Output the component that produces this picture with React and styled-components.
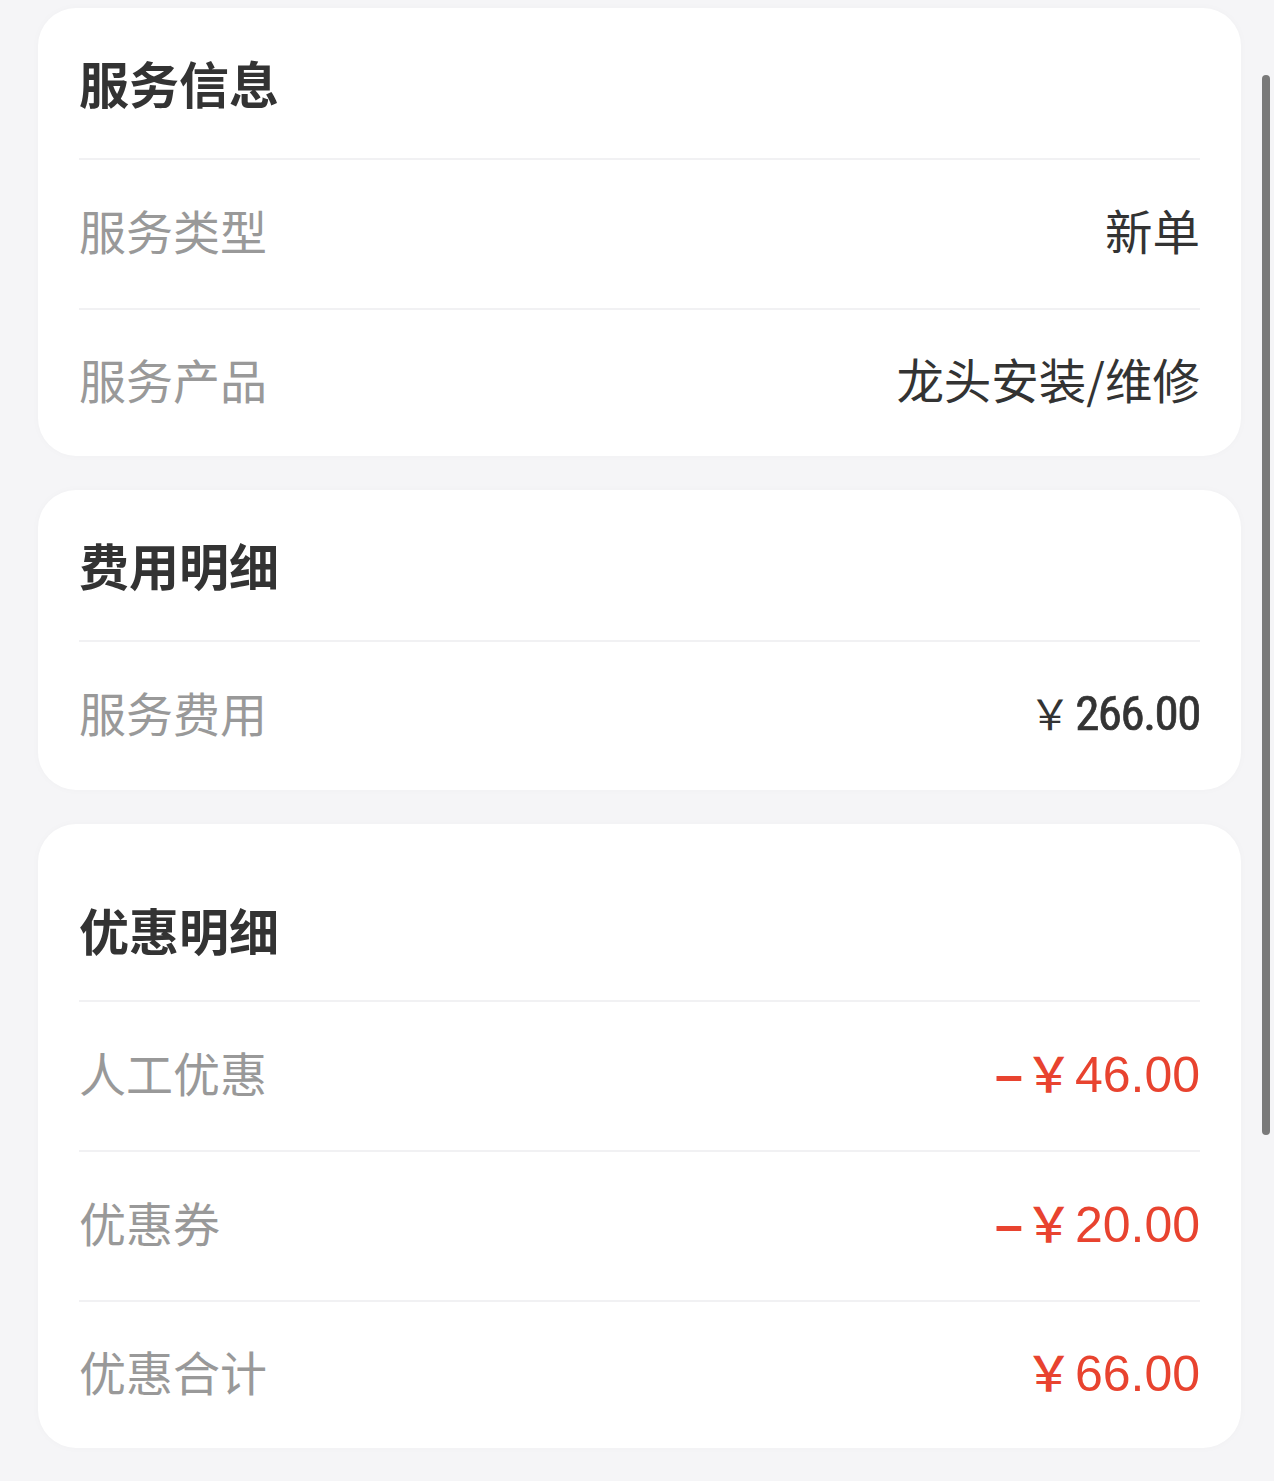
import React from "react";
import styled, { createGlobalStyle } from "styled-components";

const Global = createGlobalStyle`
  html, body { margin: 0; padding: 0; background: #f5f5f7; }
  body { font-family: "Noto Sans CJK SC", "Noto Sans", sans-serif; }
  * { box-sizing: border-box; }
`;

const Page = styled.div`
  display: flex;
  flex-direction: column;
  gap: 34px;
  padding: 8px 33px 34px 38px;
  min-height: 1481px;
  background: #f5f5f7;
`;

const Card = styled.section`
  background: #ffffff;
  border-radius: 38px;
  padding: 0 41px;
  box-shadow: 0 0 8px rgba(0, 0, 0, 0.025);
`;

const Header = styled.div`
  height: ${(p) => p.$height || 150}px;
  display: flex;
  align-items: center;
  padding-top: ${(p) => p.$offset || 0}px;
  padding-bottom: 2px;
  font-size: 50px;
  font-weight: 700;
  color: #333333;
  line-height: 1;
`;

const Row = styled.div`
  height: ${(p) => (p.$last ? 148 : 150)}px;
  border-top: 2px solid #f1f1f3;
  display: flex;
  align-items: center;
  justify-content: space-between;
  padding-bottom: 9px;
`;

const Label = styled.span`
  font-size: 47px;
  color: #999999;
  line-height: 1;
`;

const Value = styled.span`
  font-size: 47.5px;
  color: #333333;
  line-height: 1;
`;

const Amount = styled.span`
  display: inline-flex;
  align-items: baseline;
  color: ${(p) => (p.$red ? "#e8432f" : "#333333")};
  line-height: 1;
  margin-top: 4px;
`;

const Yen = styled.span`
  font-family: "Noto Sans CJK SC", sans-serif;
  font-size: ${(p) => (p.$red ? 48 : 42)}px;
  font-weight: ${(p) => (p.$red ? 500 : 400)};
  margin-right: ${(p) => (p.$red ? 2 : 0)}px;
`;

const Minus = styled.span`
  font-family: "Liberation Sans", Arial, sans-serif;
  font-size: 50px;
  font-weight: 700;
  margin-right: 2px;
`;

const Digits = styled.span`
  font-family: ${(p) =>
    p.$narrow
      ? `"Liberation Sans Narrow", "Roboto Condensed", Roboto, sans-serif`
      : `"Liberation Sans", Arial, sans-serif`};
  font-size: ${(p) => (p.$narrow ? 49 : 50)}px;
  font-weight: 400;
  letter-spacing: ${(p) => (p.$narrow ? "-1.5px" : "0")};
  margin-left: ${(p) => (p.$narrow ? 4 : 0)}px;
  -webkit-text-stroke: ${(p) => (p.$narrow ? "0.7px currentColor" : "0")};
`;

const Scrollbar = styled.div`
  position: fixed;
  top: 75px;
  right: 4px;
  width: 8px;
  height: 1060px;
  border-radius: 4px;
  background: #7a7a7a;
`;

const Money = ({ value, red, minus, narrow }) => (
  <Amount $red={red}>
    {minus && <Minus>–</Minus>}
    <Yen $red={red}>￥</Yen>
    <Digits $narrow={narrow}>{value}</Digits>
  </Amount>
);

export default function App() {
  return (
    <>
      <Global />
      <Page>
        <Card>
          <Header>服务信息</Header>
          <Row>
            <Label>服务类型</Label>
            <Value>新单</Value>
          </Row>
          <Row $last>
            <Label>服务产品</Label>
            <Value>龙头安装/维修</Value>
          </Row>
        </Card>
        <Card>
          <Header>费用明细</Header>
          <Row>
            <Label>服务费用</Label>
            <Money value="266.00" narrow />
          </Row>
        </Card>
        <Card>
          <Header $height={176} $offset={36}>优惠明细</Header>
          <Row>
            <Label>人工优惠</Label>
            <Money value="46.00" red minus />
          </Row>
          <Row>
            <Label>优惠券</Label>
            <Money value="20.00" red minus />
          </Row>
          <Row $last>
            <Label>优惠合计</Label>
            <Money value="66.00" red />
          </Row>
        </Card>
      </Page>
      <Scrollbar />
    </>
  );
}
